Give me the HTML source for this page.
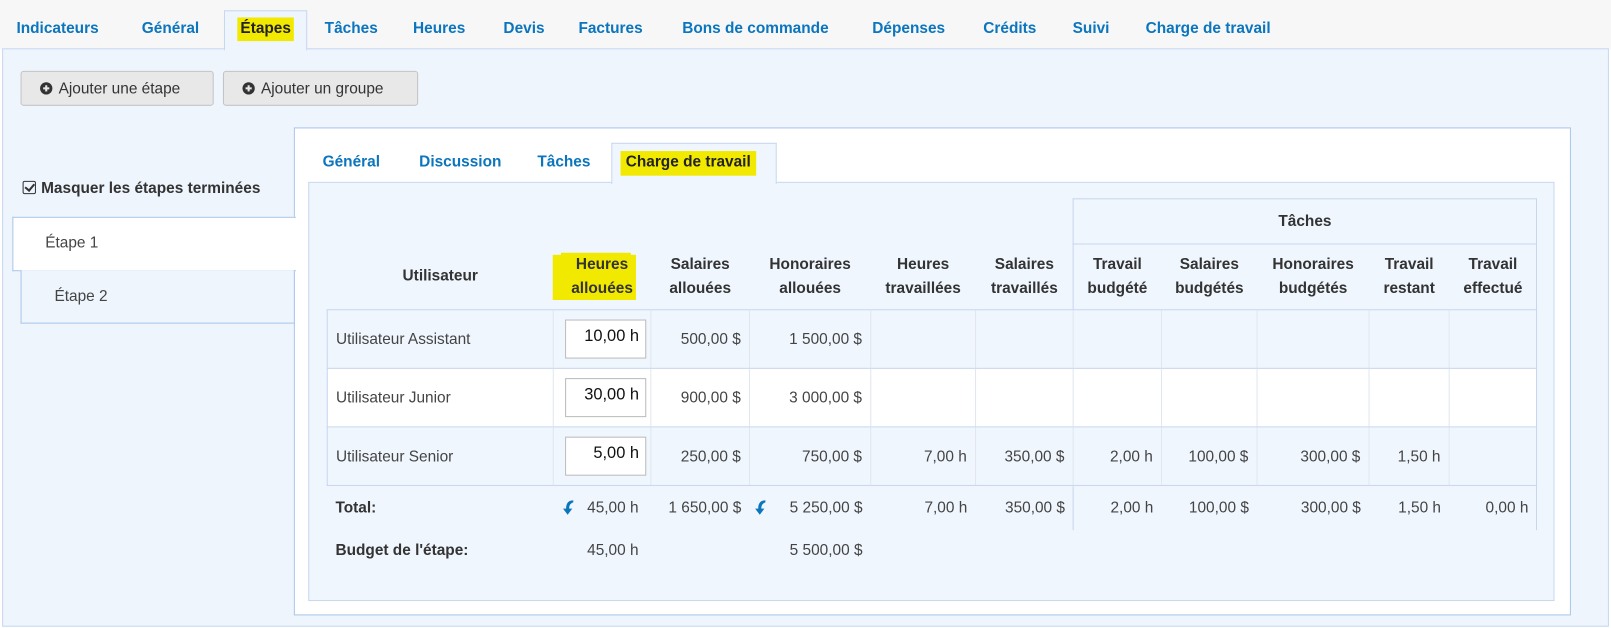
<!DOCTYPE html>
<html><head><meta charset="utf-8"><style>
html,body{margin:0;padding:0;width:1611px;height:628px;overflow:hidden;background:#fff}
#w{position:absolute;left:0;top:0;width:1568px;height:611px;transform:scale(1.02742);transform-origin:0 0;font-family:"Liberation Sans",sans-serif;font-size:15px;color:#333}
.a{position:absolute}
.tab{position:absolute;top:19px;font-weight:bold;color:#0b75bd;white-space:nowrap}
.hl{background:#f2e900;color:#222}
.btn{position:absolute;top:69px;height:34px;background:#e8e8e8;border:1px solid #c4c4c4;border-radius:3px;line-height:34px;font-size:15px;color:#333;box-sizing:border-box}
.btn i{display:inline-block;width:12px;height:12px;border-radius:50%;background:#333;position:relative;vertical-align:-1px;margin:0 6px 0 18px}
.btn i:before{content:"";position:absolute;left:3px;top:5px;width:6px;height:2px;background:#e8e8e8}
.btn i:after{content:"";position:absolute;left:5px;top:3px;width:2px;height:6px;background:#e8e8e8}
table{position:absolute;left:318px;top:193px;border-collapse:collapse;table-layout:fixed;width:1177px}
td,th{padding:0 8px;box-sizing:border-box;white-space:nowrap}
th{font-weight:bold;line-height:23px;text-align:center}
.r td{height:57px;border-top:1px solid #c9d6ee;border-bottom:1px solid #c9d6ee;border-left:1px solid #e2e7ee;text-align:right;color:#444}
.r td:first-child{text-align:left;border-left:1px solid #c9d6ee}
.r td:last-child{border-right:1px solid #c9d6ee}
.l{background:#eff6fe}.wh{background:#fff}
.inp{display:inline-block;width:79px;height:38px;border:1px solid #bbb;background:#fff;box-sizing:border-box;text-align:right;padding:7px 6px 0 0;color:#111;margin-right:-4px;font-size:16px}
.t td{text-align:right;color:#444;height:43px}
.b td{height:40px;text-align:right;color:#444}
.fx{display:flex;justify-content:space-between;align-items:center}
.cb{display:inline-block;width:11px;height:11px;border:1.5px solid #333;border-radius:2px;position:relative;margin-right:5px;vertical-align:-1px}
.cb:after{content:"";position:absolute;left:3px;top:0px;width:4px;height:7px;border:solid #333;border-width:0 2px 2px 0;transform:rotate(40deg)}
</style></head><body><div id="w">
<div class="a" style="left:0;top:0;width:1568px;height:48px;background:#f7f7f7"></div>
<div class="a" style="left:2px;top:47px;width:1564px;height:563px;background:#eef5fd;border:1px solid #c9d8f0;box-sizing:border-box"></div>
<div class="a" style="left:218px;top:10px;width:81px;height:39px;background:#eef5fd;border:1px solid #c9d8f0;border-bottom:none;box-sizing:border-box"></div>
<div class="tab" style="left:16px">Indicateurs</div>
<div class="tab" style="left:138px">Général</div>
<div class="tab" style="left:231px"><span class="hl" style="padding:2px 3px 4px">Étapes</span></div>
<div class="tab" style="left:316px">Tâches</div>
<div class="tab" style="left:402px">Heures</div>
<div class="tab" style="left:490px">Devis</div>
<div class="tab" style="left:563px">Factures</div>
<div class="tab" style="left:664px">Bons de commande</div>
<div class="tab" style="left:849px">Dépenses</div>
<div class="tab" style="left:957px">Crédits</div>
<div class="tab" style="left:1044px">Suivi</div>
<div class="tab" style="left:1115px">Charge de travail</div>
<div class="btn" style="left:20px;width:188px"><i></i>Ajouter une étape</div>
<div class="btn" style="left:217px;width:190px"><i></i>Ajouter un groupe</div>
<div class="a" style="left:22px;top:175px;font-weight:bold;color:#333"><span class="cb"></span>Masquer les étapes terminées</div>
<div class="a" style="left:286px;top:124px;width:1243px;height:475px;background:#fff;border:1px solid #a9c6ea;box-sizing:border-box"></div>
<div class="a" style="left:12px;top:211px;width:276px;height:53px;background:#fff;border:1px solid #a9c6ea;border-right:none;box-sizing:border-box"></div>
<div class="a" style="left:44px;top:228px;color:#444">Étape 1</div>
<div class="a" style="left:20px;top:263px;width:267px;height:52px;background:#eef5fd;border:1px solid #a9c6ea;border-top:none;box-sizing:border-box"></div>
<div class="a" style="left:53px;top:280px;color:#444">Étape 2</div>
<div class="a" style="left:300px;top:177px;width:1213px;height:408px;background:#eff6fe;border:1px solid #c9d8f0;box-sizing:border-box"></div>
<div class="a" style="left:595px;top:139px;width:161px;height:40px;background:#eff6fe;border:1px solid #c9d8f0;border-bottom:none;box-sizing:border-box"></div>
<div class="tab" style="left:314px;top:149px">Général</div>
<div class="tab" style="left:408px;top:149px">Discussion</div>
<div class="tab" style="left:523px;top:149px">Tâches</div>
<div class="tab" style="left:604px;top:149px"><span class="hl" style="padding:2px 5px 5px">Charge de travail</span></div>
<div class="a" style="left:1044px;top:193px;width:452px;height:323px;border:1px solid #c9d6ee;border-bottom:none;box-sizing:border-box"></div>
<div class="a" style="left:1044px;top:237px;width:452px;border-top:1px solid #c9d6ee"></div>
<div class="a" style="left:538px;top:248px;width:81px;height:44px;background:#f2e900"></div>
<div class="a" style="left:546px;top:246px;width:68px;height:20px;background:#f2e900"></div>
<table>
<colgroup><col style="width:220px"><col style="width:95px"><col style="width:96px"><col style="width:118px"><col style="width:102px"><col style="width:95px"><col style="width:86px"><col style="width:93px"><col style="width:109px"><col style="width:78px"><col style="width:85px"></colgroup>
<tr><th colspan="6" style="height:44px"></th><th colspan="5" style="height:44px">Tâches</th></tr>
<tr style="height:64px"><th style="line-height:64px">Utilisateur</th><th style="position:relative;padding:0">Heures<br>allouées</th><th>Salaires<br>allouées</th><th>Honoraires<br>allouées</th><th>Heures<br>travaillées</th><th>Salaires<br>travaillés</th><th>Travail<br>budgété</th><th>Salaires<br>budgétés</th><th>Honoraires<br>budgétés</th><th>Travail<br>restant</th><th>Travail<br>effectué</th></tr>
<tr class="r l"><td>Utilisateur Assistant</td><td><span class="inp">10,00 h</span></td><td>500,00 $</td><td>1 500,00 $</td><td></td><td></td><td></td><td></td><td></td><td></td><td></td></tr>
<tr class="r wh"><td>Utilisateur Junior</td><td><span class="inp">30,00 h</span></td><td>900,00 $</td><td>3 000,00 $</td><td></td><td></td><td></td><td></td><td></td><td></td><td></td></tr>
<tr class="r l"><td>Utilisateur Senior</td><td><span class="inp">5,00 h</span></td><td>250,00 $</td><td>750,00 $</td><td>7,00 h</td><td>350,00 $</td><td>2,00 h</td><td>100,00 $</td><td>300,00 $</td><td>1,50 h</td><td></td></tr>
<tr class="t"><td style="text-align:left;font-weight:bold;color:#333">Total:</td><td style="padding-right:12px"><div class="fx"><svg width="12" height="16" viewBox="0 0 12 16"><path d="M11 1C6 1 4 4 4 9H1l4.5 6L10 9H7c0-3 1-5 4-6z" fill="#0b75bd"/></svg><span>45,00 h</span></div></td><td>1 650,00 $</td><td style="padding-left:4px"><div class="fx"><svg width="12" height="16" viewBox="0 0 12 16"><path d="M11 1C6 1 4 4 4 9H1l4.5 6L10 9H7c0-3 1-5 4-6z" fill="#0b75bd"/></svg><span>5 250,00 $</span></div></td><td>7,00 h</td><td>350,00 $</td><td>2,00 h</td><td>100,00 $</td><td>300,00 $</td><td>1,50 h</td><td>0,00 h</td></tr>
<tr class="b"><td style="text-align:left;font-weight:bold;color:#333">Budget de l'étape:</td><td style="padding-right:12px">45,00 h</td><td></td><td>5 500,00 $</td><td colspan="7"></td></tr>
</table>
</div></body></html>
